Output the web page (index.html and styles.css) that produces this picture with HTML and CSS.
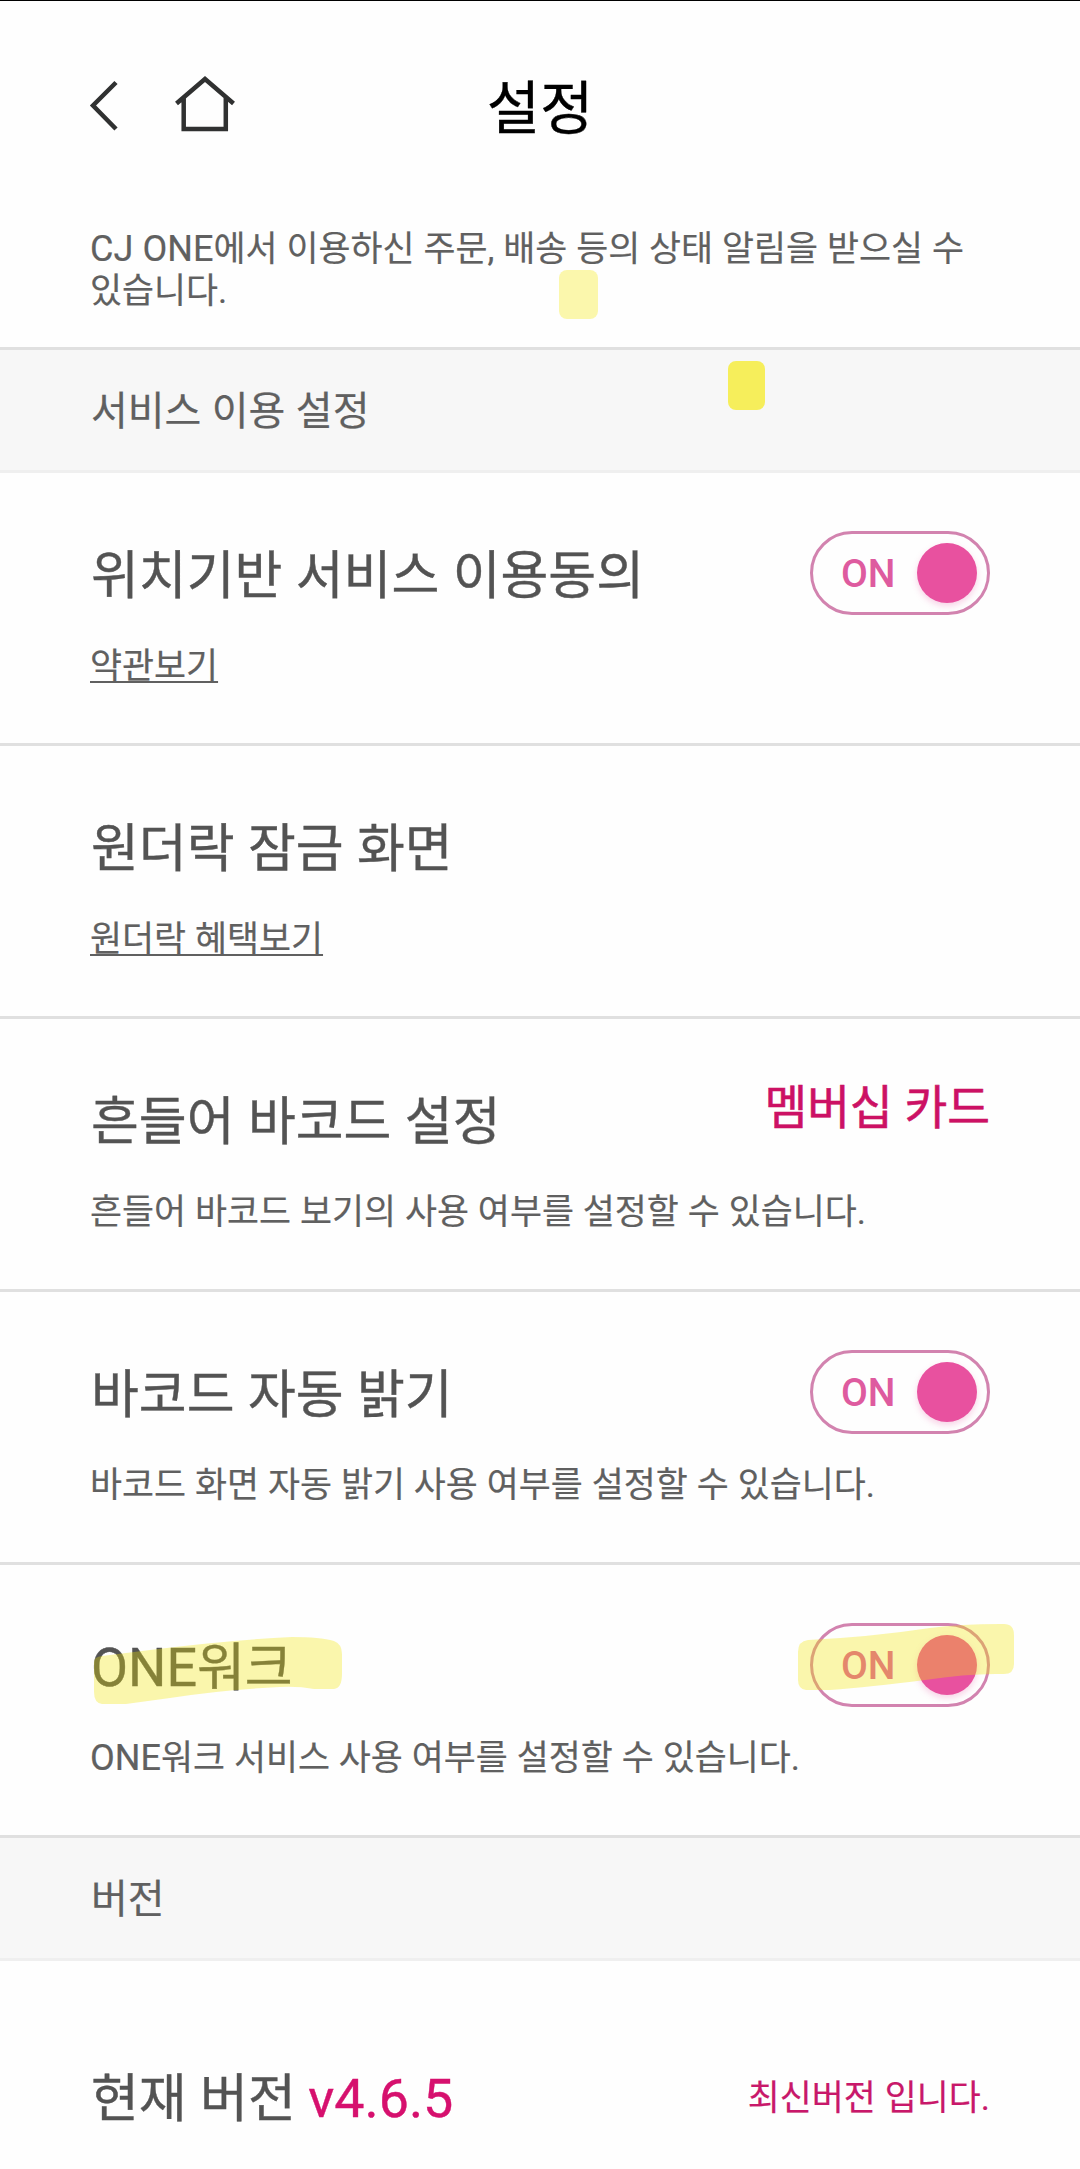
FILE: index.html
```html
<!DOCTYPE html>
<html lang="ko">
<head>
	<meta charset="utf-8">
	<title>설정</title>
	<link rel="stylesheet" href="styles.css">
</head>

<body>
	<div id="wrapper">
		<header>
			<nav>
				<a class="back">
					<svg width="32" height="58" viewBox="0 0 32 58"><path d="M28 7.500 L5 30.500 L28 54"/></svg>
				</a>
				<a class="home">
					<svg width="64" height="58" viewBox="0 0 64 58"><path d="M3.500 28.500 L32 4 L60.500 28.500 M10.700 23 V54 H52.800 V23"/></svg>
				</a>
			</nav>
			<h1>설정</h1>
		</header>

		<section class="intro">
			<p><span class="en">CJ ONE</span>에서 이용하신 주문, 배송 등의 상태 알림을 받으실 수 있습니다.</p>
			<span class="mark mark1"></span>
		</section>

		<h2 class="bar">서비스 이용 설정<span class="mark mark2"></span></h2>

		<section class="row">
			<div class="text">
				<h3>위치기반 서비스 이용동의</h3>
				<p><a class="link">약관보기</a></p>
			</div>
			<div class="toggle"><span>ON</span><i></i></div>
		</section>

		<section class="row">
			<div class="text">
				<h3>원더락 잠금 화면</h3>
				<p><a class="link">원더락 혜택보기</a></p>
			</div>
		</section>

		<section class="row">
			<div class="text">
				<h3>흔들어 바코드 설정</h3>
				<p>흔들어 바코드 보기의 사용 여부를 설정할 수 있습니다.</p>
			</div>
			<strong class="card">멤버십 카드</strong>
		</section>

		<section class="row">
			<div class="text">
				<h3>바코드 자동 밝기</h3>
				<p>바코드 화면 자동 밝기 사용 여부를 설정할 수 있습니다.</p>
			</div>
			<div class="toggle"><span>ON</span><i></i></div>
		</section>

		<section class="row">
			<div class="text">
				<h3><span class="en">ONE</span>워크</h3>
				<p><span class="en">ONE</span>워크 서비스 사용 여부를 설정할 수 있습니다.</p>
			</div>
			<div class="toggle"><span>ON</span><i></i></div>
			<!-- rotulador amarillo -->
			<svg class="marker" width="1080" height="270" viewBox="0 0 1080 270">
				<path d="M94 98 Q93 91 102 90 L150 84 Q230 74 292 71 Q320 71 334 75 Q342 78 342 88 V108 Q342 122 334 123 H314 Q298 120 280 121 Q220 124 170 132 L126 138 H102 Q94 137 94 126 Z"/>
				<path d="M798 86 Q798 75 808 74 Q870 71 930 62 Q960 58 1000 58 H1004 Q1014 58 1014 69 V98 Q1014 108 1004 108 Q970 107 925 114 Q870 121 830 124 H806 Q798 123 798 114 Z"/>
			</svg>
		</section>

		<h2 class="bar">버전</h2>

		<section class="version">
			<h3>현재 버전 <em class="en">v4.6.5</em></h3>
			<p>최신버전 입니다.</p>
		</section>
	</div>
</body>
</html>
```
FILE: styles.css
```css
*{
	margin: 0px;
	padding: 0px;
	box-sizing: border-box;
}
body{
	background-color: #FEFEFE;
	font-family: Roboto, "Noto Sans CJK KR", sans-serif;
	color: #606060;
}
#wrapper{
	width: 1080px;
	height: 2169px;
	overflow: hidden;
	border-top: 1px solid #000;
}
header{
	display: grid;
	grid-template-columns: 1fr auto 1fr;
	align-items: center;
	height: 210px;
	padding: 0px 88px;
}
header nav{
	display: flex;
	align-items: center;
	gap: 53px;
	padding-bottom: 4px;
}
header svg{
	display: block;
	fill: none;
	stroke: #303131;
	stroke-width: 4.500;
}
header h1{
	padding-top: 6px;
	font-size: 58px;
	font-weight: 400;
	line-height: 80px;
	color: #000;
	-webkit-text-stroke: 0.3px;
}
.intro{
	position: relative;
	height: 139px;
	padding: 17px 90px 0px 90px;
	border-bottom: 3px solid #E0E0E0;
}
p{
	font-size: 34.8px;
	line-height: 42px;
	word-spacing: 0.3px;
	-webkit-text-stroke: 0.2px;
}
/* el latino va un poco mas grande que el coreano */
.en{
	font-size: 1.035em;
	line-height: 1;
}
.mark{
	position: absolute;
	border-radius: 8px;
}
.mark1{
	left: 559px;
	top: 59px;
	width: 39px;
	height: 49px;
	background-color: #FBF7AC;
}
.mark2{
	left: 728px;
	top: 11px;
	width: 37px;
	height: 49px;
	background-color: #F6EE5B;
}
.bar{
	position: relative;
	height: 123px;
	padding: 2px 90px 0px 91px;
	background-color: #F7F7F7;
	border-bottom: 3px solid #EFEFEF;
	font-size: 40px;
	font-weight: 400;
	line-height: 120px;
	word-spacing: 0.5px;
	-webkit-text-stroke: 0.2px;
}
.row{
	position: relative;
	display: flex;
	justify-content: space-between;
	height: 273px;
	padding: 58px 90px 0px 90px;
	border-bottom: 3px solid #E0E0E0;
}
.text{
	width: 0px;
	padding-top: 4px;
	white-space: nowrap;
}
h3{
	padding-left: 1px;
	font-size: 52px;
	font-weight: 400;
	line-height: 84px;
	word-spacing: 0.5px;
	color: #535353;
	-webkit-text-stroke: 0.4px;
}
.text p{
	margin-top: 26px;
}
.link{
	text-decoration: underline;
	text-decoration-thickness: 2px;
	text-underline-offset: 3px;
}
.toggle{
	display: flex;
	align-items: center;
	justify-content: space-between;
	width: 180px;
	height: 84px;
	padding: 0px 10px 0px 28px;
	border: 3px solid #D283AF;
	border-radius: 42px;
}
.toggle span{
	padding-top: 1px;
	font-size: 39px;
	font-weight: 500;
	color: #DE5B9F;
}
.toggle i{
	width: 60px;
	height: 60px;
	border-radius: 50%;
	background-color: #E8519F;
	box-shadow: 0px 3px 6px rgba(232,81,159,0.25);
}
.card{
	height: 66px;
	font-size: 46.500px;
	font-weight: 400;
	line-height: 62px;
	white-space: nowrap;
	color: #CC1164;
	-webkit-text-stroke: 0.6px;
}
.marker{
	position: absolute;
	left: 0px;
	top: 1px;
	fill: rgba(242,230,0,0.32);
}
.version{
	display: flex;
	justify-content: space-between;
	align-items: center;
	height: 208px;
	padding: 70px 90px 0px 90px;
}
.version em{
	margin-left: -1px;
	font-style: normal;
	color: #D6106E;
}
.version p{
	padding-bottom: 4px;
	color: #C8186A;
}
```
